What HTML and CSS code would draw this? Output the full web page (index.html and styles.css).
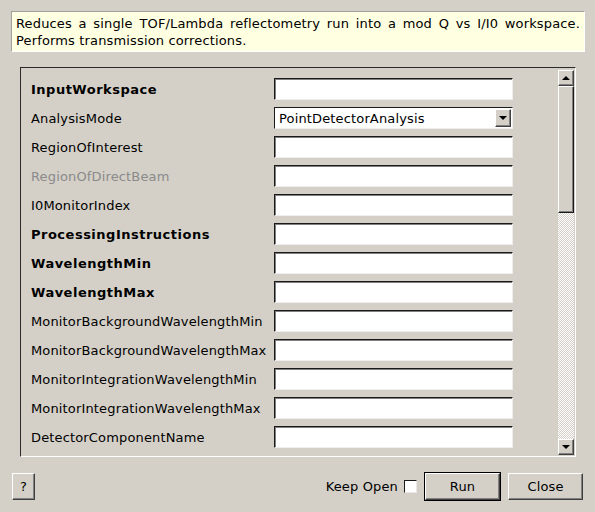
FILE: index.html
```html
<!DOCTYPE html>
<html>
<head>
<meta charset="utf-8">
<link rel="stylesheet" href="styles.css">
</head>
<body>
<div class="dialog">
  <div class="desc">Reduces a single TOF/Lambda reflectometry run into a mod Q vs I/I0 workspace. Performs transmission corrections.</div>
  <div class="panel">
    <div class="props">
      <div class="lbl bold">InputWorkspace</div><div class="field"></div>
      <div class="lbl">AnalysisMode</div>
      <div class="field combo"><span class="combo-text">PointDetectorAnalysis</span><span class="combo-btn"><span class="tri-down"></span></span></div>
      <div class="lbl">RegionOfInterest</div><div class="field"></div>
      <div class="lbl disabled">RegionOfDirectBeam</div><div class="field"></div>
      <div class="lbl">I0MonitorIndex</div><div class="field"></div>
      <div class="lbl bold">ProcessingInstructions</div><div class="field"></div>
      <div class="lbl bold">WavelengthMin</div><div class="field"></div>
      <div class="lbl bold">WavelengthMax</div><div class="field"></div>
      <div class="lbl">MonitorBackgroundWavelengthMin</div><div class="field"></div>
      <div class="lbl">MonitorBackgroundWavelengthMax</div><div class="field"></div>
      <div class="lbl">MonitorIntegrationWavelengthMin</div><div class="field"></div>
      <div class="lbl">MonitorIntegrationWavelengthMax</div><div class="field"></div>
      <div class="lbl">DetectorComponentName</div><div class="field"></div>
    </div>
    <div class="vscroll">
      <div class="sb-btn"><span class="tri-up"></span></div>
      <div class="thumb"></div>
      <div class="track"></div>
      <div class="sb-btn"><span class="tri-down"></span></div>
    </div>
  </div>
  <div class="footer">
    <button class="btn help">?</button>
    <div class="spacer"></div>
    <label class="keep">Keep Open <span class="check"></span></label>
    <button class="btn default">Run</button>
    <button class="btn">Close</button>
  </div>
</div>
</body>
</html>
```
FILE: styles.css
```css
html, body {
  margin: 0;
  padding: 0;
  background: #d4d0c8;
}
body {
  width: 595px;
  height: 512px;
  overflow: hidden;
  font-family: "DejaVu Sans", sans-serif;
  font-size: 13px;
  letter-spacing: 0.15px;
  color: #000;
}
.dialog {
  display: flex;
  flex-direction: column;
  height: 512px;
}
.desc {
  margin: 11px 10px 0 11px;
  height: 33px;
  padding: 3px 4px 3px 4px;
  background: #ffffe1;
  border: 1px solid;
  border-color: #a0a0a0 #ffffff #ffffff #a0a0a0;
  line-height: 17px;
  text-align: justify;
}
.panel {
  margin: 15px 0 0 20px;
  width: 554px;
  height: 388px;
  border: 1px solid;
  border-color: #2a2a2a #ffffff #ffffff #2a2a2a;
  display: flex;
}
.props {
  flex: 1;
  overflow: hidden;
  padding: 10px 0 0 10px;
  display: grid;
  grid-template-columns: 243px 239px;
  grid-auto-rows: 22px;
  row-gap: 7px;
  align-content: start;
}
.lbl {
  display: flex;
  align-items: center;
  white-space: nowrap;
}
.lbl.bold {
  font-weight: bold;
  letter-spacing: 0.5px;
}
.lbl.disabled {
  color: #8a8a8a;
}
.field {
  box-sizing: border-box;
  height: 22px;
  background: #fff;
  border: 1px solid;
  border-color: #1a1a1a #eeeeee #eeeeee #1a1a1a;
  box-shadow: inset 1px 1px 0 #808080;
}
.combo {
  display: flex;
  align-items: center;
  box-shadow: none;
}
.combo-text {
  flex: 1;
  padding-left: 4px;
}
.combo-btn {
  box-sizing: border-box;
  width: 16px;
  height: 18px;
  margin-right: 1px;
  background: #d4d0c8;
  border: 1px solid;
  border-color: #ffffff #404040 #404040 #ffffff;
  box-shadow: inset -1px -1px 0 #808080;
  display: flex;
  align-items: center;
  justify-content: center;
}
.tri-down {
  width: 0;
  height: 0;
  border-left: 4px solid transparent;
  border-right: 4px solid transparent;
  border-top: 4px solid #000;
}
.tri-up {
  width: 0;
  height: 0;
  border-left: 4px solid transparent;
  border-right: 4px solid transparent;
  border-bottom: 4px solid #000;
}
.vscroll {
  width: 16px;
  margin: 2px 1px 0 0;
  height: 385px;
  display: flex;
  flex-direction: column;
}
.sb-btn {
  box-sizing: border-box;
  height: 16px;
  flex: none;
  background: #d4d0c8;
  border: 1px solid;
  border-color: #ffffff #404040 #404040 #ffffff;
  box-shadow: inset -1px -1px 0 #808080;
  display: flex;
  align-items: center;
  justify-content: center;
}
.thumb {
  box-sizing: border-box;
  height: 127px;
  flex: none;
  background: #d4d0c8;
  border: 1px solid;
  border-color: #ffffff #1a1a1a #1a1a1a #ffffff;
  box-shadow: inset -1px -1px 0 #808080;
}
.track {
  flex: 1;
  background-color: #d4d0c8;
  background-image: conic-gradient(#ffffff 25%, #d4d0c8 0 50%, #ffffff 0 75%, #d4d0c8 0);
  background-size: 2px 2px;
}
.footer {
  display: flex;
  align-items: center;
  padding: 0 12px 0 12px;
  margin-top: 16px;
  height: 27px;
}
.spacer {
  flex: 1;
}
.btn {
  box-sizing: border-box;
  height: 27px;
  width: 75px;
  margin: 0;
  padding: 0;
  font-family: "DejaVu Sans", sans-serif;
  font-size: 13px;
  letter-spacing: 0.15px;
  color: #000;
  background: #d4d0c8;
  border: 1px solid;
  border-color: #ffffff #404040 #404040 #ffffff;
  box-shadow: inset -1px -1px 0 #808080;
}
.btn.help {
  width: 23px;
}
.btn.default {
  outline: 1px solid #000;
  margin-right: 8px;
  margin-left: 8px;
}
.keep {
  display: flex;
  align-items: center;
}
.check {
  box-sizing: border-box;
  width: 13px;
  height: 13px;
  margin-left: 6px;
  background: #fff;
  border: 1px solid;
  border-color: #1a1a1a #e8e8e8 #e8e8e8 #1a1a1a;
}
```
